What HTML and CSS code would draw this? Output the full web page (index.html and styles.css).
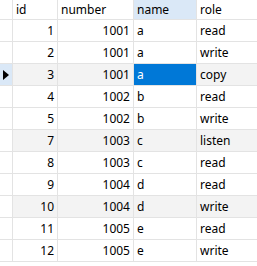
FILE: index.html
```html
<!DOCTYPE html>
<html lang="en">
<head>
    <meta charset="UTF-8">
    <title>Result grid</title>
    <link rel="stylesheet" href="styles.css">
</head>
<body>
    <div class="grid">
        <!-- Header -->
        <div class="cell head ind"></div>
        <div class="cell head">id</div>
        <div class="cell head">number</div>
        <div class="cell head sorted">name</div>
        <div class="cell head">role</div>

        <div class="cell ind"></div><div class="cell num">1</div><div class="cell num">1001</div><div class="cell">a</div><div class="cell">read</div>
        <div class="cell ind"></div><div class="cell num">2</div><div class="cell num">1001</div><div class="cell">a</div><div class="cell">write</div>
        <div class="cell ind current"><span class="arrow"></span></div><div class="cell num shade">3</div><div class="cell num shade">1001</div><div class="cell selected">a</div><div class="cell shade">copy</div>
        <div class="cell ind"></div><div class="cell num">4</div><div class="cell num">1002</div><div class="cell">b</div><div class="cell">read</div>
        <div class="cell ind"></div><div class="cell num">5</div><div class="cell num">1002</div><div class="cell">b</div><div class="cell">write</div>
        <div class="cell ind"></div><div class="cell num shade">7</div><div class="cell num shade">1003</div><div class="cell shade">c</div><div class="cell shade">listen</div>
        <div class="cell ind"></div><div class="cell num">8</div><div class="cell num">1003</div><div class="cell">c</div><div class="cell">read</div>
        <div class="cell ind"></div><div class="cell num">9</div><div class="cell num">1004</div><div class="cell">d</div><div class="cell">read</div>
        <div class="cell ind"></div><div class="cell num shade">10</div><div class="cell num shade">1004</div><div class="cell shade">d</div><div class="cell shade">write</div>
        <div class="cell ind"></div><div class="cell num">11</div><div class="cell num">1005</div><div class="cell">e</div><div class="cell">read</div>
        <div class="cell ind"></div><div class="cell num">12</div><div class="cell num">1005</div><div class="cell">e</div><div class="cell">write</div>
    </div>
</body>
</html>
```

FILE: styles.css
```css
/* Page */
body {
    margin: 0;
    background: #fff;
    font-family: 'Noto Sans', 'Liberation Sans', sans-serif;
    font-size: 12px;
    color: #000;
}

/* Result grid */
.grid {
    display: grid;
    grid-template-columns: 13px 45px 76px 63px 70px;
    grid-auto-rows: 22px;
    grid-template-rows: 20px;
}

.cell {
    box-sizing: border-box;
    border-right: 1px solid #e3e3e3;
    border-bottom: 1px solid #e3e3e3;
    padding: 0 3px 0 3px;
    line-height: 21px;
    white-space: nowrap;
    overflow: hidden;
}

.head {
    line-height: 19px;
}

.sorted {
    background: #dae8f7;
}

.num {
    text-align: right;
}

.shade {
    background: #f3f3f3;
}

.selected {
    background: #0078d7;
    color: #fff;
}

/* Row indicator column */
.ind {
    padding: 0;
    position: relative;
}

.current {
    background: #dae8f7;
}

.arrow {
    position: absolute;
    left: 3px;
    top: 6px;
    width: 0;
    height: 0;
    border-top: 5px solid transparent;
    border-bottom: 5px solid transparent;
    border-left: 6px solid #000;
}
```
